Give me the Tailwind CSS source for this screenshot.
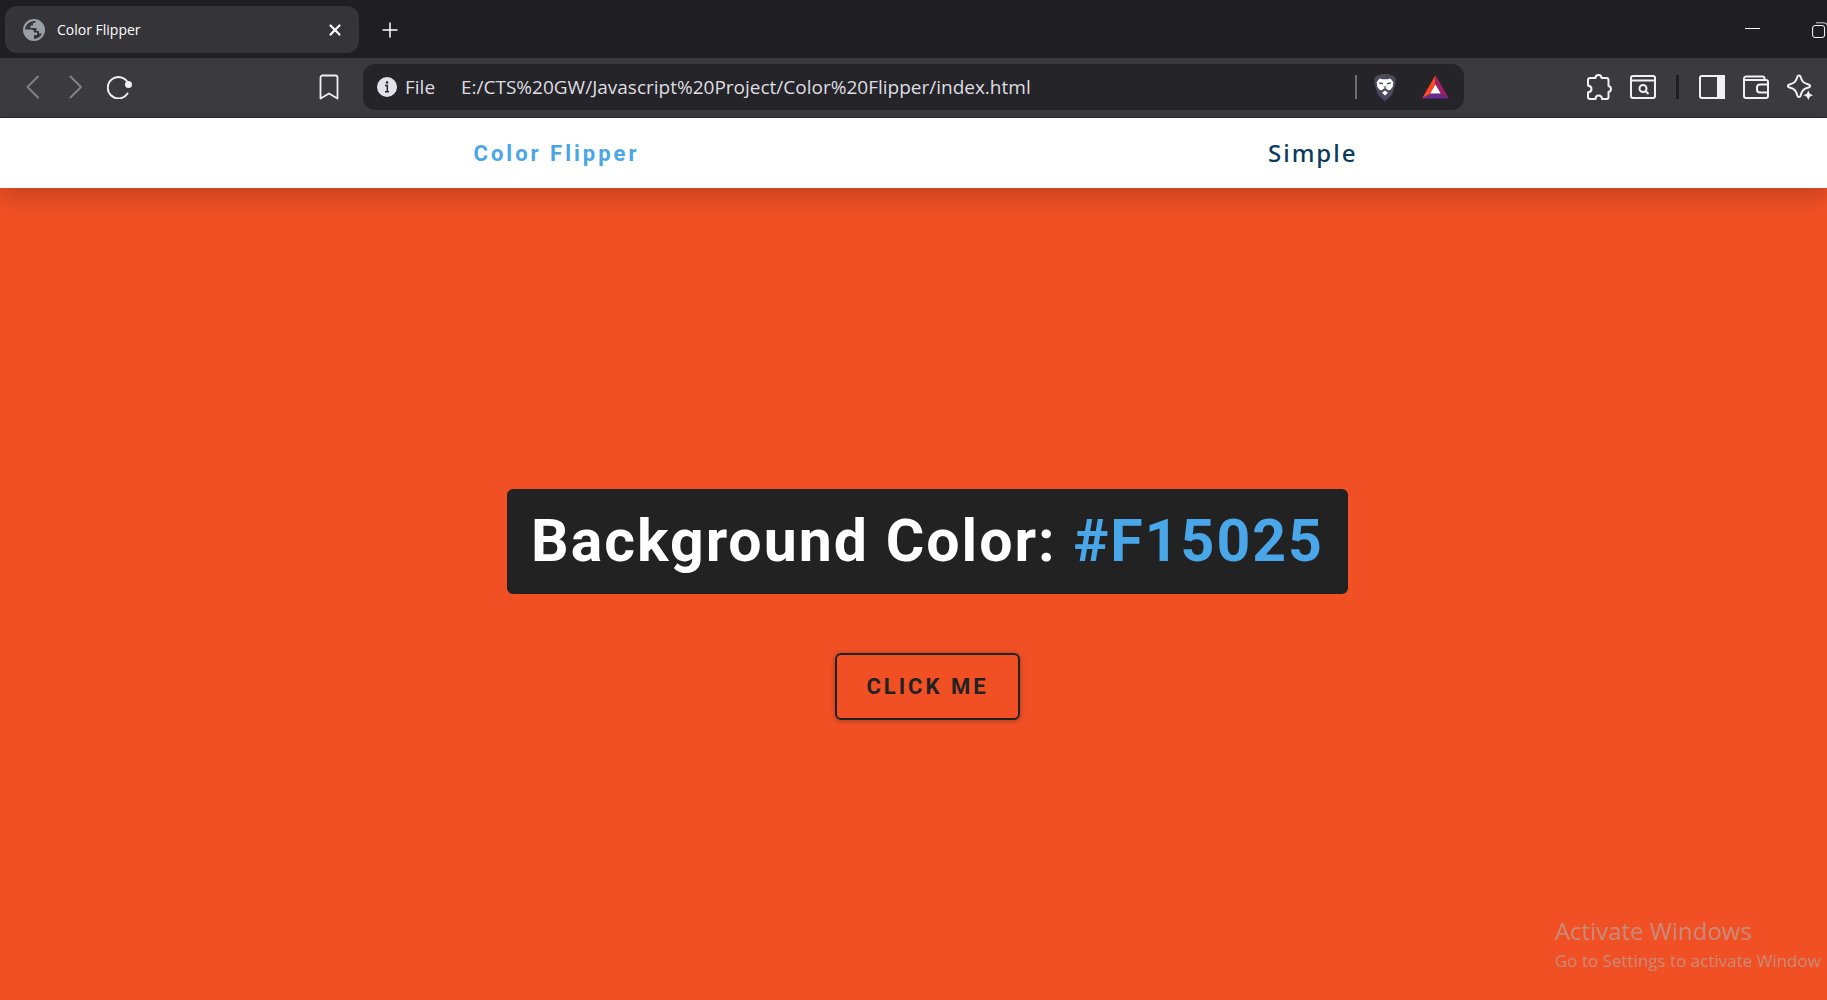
<!DOCTYPE html>
<html lang="en">
<head>
<meta charset="utf-8">
<title>Color Flipper</title>
<script src="https://cdn.jsdelivr.net/npm/@tailwindcss/browser@4"></script>
</head>
<body class="min-h-screen flex flex-col overflow-hidden bg-[#f15025] font-['Open_Sans',sans-serif]">
  <!-- Tab strip -->
  <header class="flex h-[58px] items-center overflow-hidden bg-[#1f1e23] pl-[5px] pt-px text-white">
    <div class="flex h-[47px] w-[354px] items-center rounded-xl bg-[#353439] pl-[18px] pr-4">
      <svg class="size-[22px]" viewBox="0 0 22 22"><circle cx="11" cy="11" r="10" fill="#36373c" stroke="#9aa0a6" stroke-width="2"/><path d="M1.500 10.500H8c2 0 3 1 3 3h3v2.500h-3V20.500C5 20.500 1 16 1.500 10.500z" fill="#9aa0a6"/><path d="M12.500 1.500V4H10v2.500H7.500V9h6v3H16v2.500h4.500C22 8 18.500 2 12.500 1.500z" fill="#9aa0a6"/></svg>
      <span class="ml-3 text-sm">Color Flipper</span>
      <button aria-label="Close tab" class="ml-auto"><svg class="size-4" viewBox="0 0 16 16" fill="none" stroke="#fff" stroke-width="2.200" stroke-linecap="round"><path d="M3.500 3.500l9 9M12.500 3.500l-9 9"/></svg></button>
    </div>
    <button aria-label="New tab" class="ml-[23px]"><svg class="size-4" viewBox="0 0 16 16" stroke="#fff" stroke-width="1.500"><path d="M8 .5v15M.5 8h15"/></svg></button>
    <button aria-label="Minimize" class="ml-auto"><svg class="h-4 w-[15px]" viewBox="0 0 15 16"><path d="M0 6.500h15" stroke="#fff"/></svg></button>
    <button aria-label="Restore" class="ml-[52px] -mr-px"><svg class="size-4" viewBox="0 0 16 16" fill="none" stroke="#fff"><rect x=".6" y="3.500" width="12" height="12" rx="2.500"/><path d="M4 .8h8a3.500 3.500 0 0 1 3.500 3.500V12" stroke-opacity=".8"/></svg></button>
  </header>
  <!-- Toolbar -->
  <div class="flex h-[60px] items-center border-b border-[#2b2a2f] bg-[#3b3a3f] pb-px pl-[26px] pr-[14px]">
    <button aria-label="Back"><svg class="h-6 w-3.5" viewBox="0 0 14 24" fill="none" stroke="#828186" stroke-width="2" stroke-linecap="round" stroke-linejoin="round"><path d="M12 1.500L1.500 12 12 22.500"/></svg></button>
    <button aria-label="Forward" class="ml-[29px]"><svg class="h-6 w-3.5" viewBox="0 0 14 24" fill="none" stroke="#828186" stroke-width="2" stroke-linecap="round" stroke-linejoin="round"><path d="M1.500 1.500L12 12 1.500 22.500"/></svg></button>
    <button aria-label="Reload" class="ml-6"><svg class="h-6 w-[26px]" viewBox="0 0 26 24" fill="none" stroke="#f1f0f4" stroke-width="2" stroke-linecap="round"><path d="M21.500 9A10.700 10.700 0 1 0 20.500 18.500"/><circle cx="21.500" cy="9.500" r="2.500" fill="#f1f0f4"/></svg></button>
    <button aria-label="Bookmark" class="ml-[186px]"><svg class="h-[26px] w-5" viewBox="0 0 20 26" fill="none" stroke="#f1f0f4" stroke-width="1.800" stroke-linejoin="round"><path d="M3.500 1.500h13a2 2 0 0 1 2 2V24.500L10 19.500 1.500 24.500V3.500a2 2 0 0 1 2-2z"/></svg></button>
    <div class="ml-6 flex h-[46px] w-[1101px] items-center rounded-xl bg-[#252429] pl-[14px] pr-[15px] text-[19px] text-[#dfdee3]">
      <svg class="size-5" viewBox="0 0 20 20"><circle cx="10" cy="10" r="10" fill="#e3e2e8"/><circle cx="10" cy="5.500" r="1.300" fill="#252429"/><path d="M8 8.500h2.300V14.500M8 14.800h4" stroke="#252429" stroke-width="1.500" fill="none"/></svg>
      <label for="url" class="ml-2 w-14">File</label>
      <input id="url" class="min-w-0 flex-1 bg-transparent outline-none" value="E:/CTS%20GW/Javascript%20Project/Color%20Flipper/index.html">
      <span class="h-6 w-0.5 bg-[#6f6e73]"></span>
      <button aria-label="Shields" class="ml-4"><svg class="h-[27px] w-6" viewBox="0 0 24 27"><path d="M6.500 1L8.500 0h7l2 1 3 .7 2.500 3-.7 2.500.3 2-2.600 9.300L18 22l-6 5-6-5-2-3.500L1.400 9.200l.3-2L1 4.700l2.500-3z" fill="#4b4a5c"/><path d="M6.500 4.500l3 .7h5l3-.7 3 4-.7 2 .2 1.800-2.500 3.500-2.200.5L12 13.800l-3.300 2.500-2.200-.5L4 12.300l.2-1.800-.7-2z" fill="#fff"/><path d="M9 18.800l3-2.300 3 2.300-3 2.700z" fill="#fff"/><path d="M6 8.300l4.200.8-.7 1.300-3.200-.6zM18 8.300l-4.200.8.7 1.300 3.200-.6zM10.300 10l.4 3 1.300 1 1.300-1 .4-3-.5 2.500h-2.400z" fill="#4b4a5c"/></svg></button>
      <button aria-label="Rewards" class="ml-[25px]"><svg class="h-6 w-[27px]" viewBox="0 0 27 24"><path d="M13.500 0L0 23.500l9-5 4.500-9z" fill="#ff4724"/><path d="M13.500 0L27 23.500l-9-5-4.500-9z" fill="#9e1f63"/><path d="M0 23.500h27l-9-5H9z" fill="#662d91"/><path d="M13.500 9.500l5.200 9H8.300z" fill="#fff"/></svg></button>
    </div>
    <div class="ml-auto flex items-center gap-[18px]">
      <button aria-label="Extensions"><svg class="size-[26px]" viewBox="0 0 26 26" fill="none" stroke="#f1f0f4" stroke-width="2" stroke-linejoin="round"><path d="M4 4h5.500c0-2 1-3 3-3s3 1 3 3h5a2 2 0 0 1 2 2v6c1.500.3 2.500 1.200 2.500 3s-1 2.700-2.500 3v5a2 2 0 0 1-2 2h-4.500c0-2.500-1.500-3.500-3.500-3.500S9.500 22.500 9.500 25H4a2 2 0 0 1-2-2v-4.500c2.500-.5 3.500-1.500 3.500-3.500S4.500 12 2 11.500V6a2 2 0 0 1 2-2z"/></svg></button>
      <button aria-label="Search tabs"><svg class="size-[26px]" viewBox="0 0 26 26" fill="none" stroke="#f1f0f4" stroke-width="2"><rect x="1" y="2" width="24" height="22" rx="2"/><path d="M1 6.500h24M15.500 17l3 3"/><circle cx="13" cy="14.500" r="3.500"/></svg></button>
      <span class="mx-0.5 h-6 w-[3px] bg-[#1f1e23]"></span>
      <button aria-label="Sidebar"><svg class="size-[26px]" viewBox="0 0 26 26" fill="none" stroke="#f1f0f4" stroke-width="2"><rect x="1" y="2" width="24" height="22" rx="2"/><path d="M19 2h6v22h-6z" fill="#f1f0f4"/></svg></button>
      <button aria-label="Wallet"><svg class="size-[26px]" viewBox="0 0 26 26" fill="none" stroke="#f1f0f4" stroke-width="2"><path d="M21.500 6V4.500a2 2 0 0 0-2-2H3a2 2 0 0 0-2 2v17.500a2 2 0 0 0 2 2h20a2 2 0 0 0 2-2V8a2 2 0 0 0-2-2H1M25 10.500h-8a3 3 0 0 0-3 3v2a3 3 0 0 0 3 3h8"/></svg></button>
      <button aria-label="Leo AI"><svg class="size-[26px]" viewBox="0 0 26 26" fill="none" stroke="#f1f0f4" stroke-width="2" stroke-linejoin="round"><path d="M12 1.500c1 0 1.400.6 1.700 1.500 1.200 4.500 2.500 6 7.800 7.500 2.200.8 2.200 2.200 0 3-5.300 1.500-6.600 3-7.800 8-.6 2-2.800 2-3.400 0C9 16.500 7.800 15 2.500 13.500c-2.200-.8-2.200-2.200 0-3C7.800 9 9 7.500 10.300 3c.3-.9.700-1.500 1.700-1.500z"/><path d="M21.300 16.500l1.500 3.300 3.200 1.500-3.200 1.500-1.500 3.200-1.500-3.200-3.300-1.500 3.300-1.500z" fill="#f1f0f4" stroke="none"/></svg></button>
    </div>
  </div>
  <!-- Page -->
  <nav class="h-[70px] bg-white pl-1 shadow-[0_8px_22px_rgba(0,0,0,0.2)]">
    <div class="mx-auto flex h-full w-[884px] items-center justify-between">
      <h4 class="font-['Roboto'] text-[22px] font-bold tracking-[3px] text-[#49a6e9]">Color Flipper</h4>
      <a href="#" class="font-['Noto_Sans'] text-2xl font-medium tracking-[2px] text-[#0a3a5c]">Simple</a>
    </div>
  </nav>
  <main class="relative flex flex-1 flex-col items-center justify-center pl-7 pt-5 font-['Roboto']">
    <h2 class="flex h-[105px] items-center whitespace-pre rounded-md bg-[#222] px-6 text-[59px] font-bold tracking-[2px] text-white">Background Color: <span class="text-[#49a6e9]">#F15025</span></h2>
    <button class="mt-[59px] h-[67px] rounded-md border-2 border-[#222] px-[29px] text-[22px] font-bold tracking-[3px] text-[#222] shadow-[0_1px_5px_rgba(0,0,0,0.3)]">CLICK ME</button>
    <aside class="absolute bottom-[25px] left-[85%] whitespace-nowrap pl-0.5 font-['Open_Sans'] text-[#c98a78]">
      <p class="text-2xl">Activate Windows</p>
      <p class="text-[17px] leading-7">Go to Settings to activate Window</p>
    </aside>
  </main>
</body>
</html>
